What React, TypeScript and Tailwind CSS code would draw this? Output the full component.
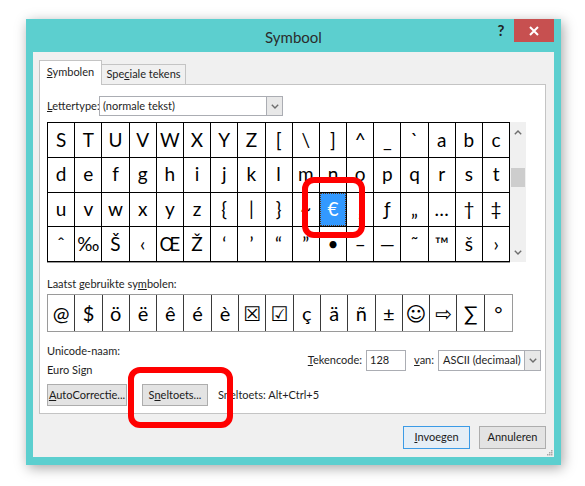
import React from "react";

const rows = [
  ["S", "T", "U", "V", "W", "X", "Y", "Z", "[", "\\", "]", "^", "_", "`", "a", "b", "c"],
  ["d", "e", "f", "g", "h", "i", "j", "k", "l", "m", "n", "o", "p", "q", "r", "s", "t"],
  ["u", "v", "w", "x", "y", "z", "{", "|", "}", "~", "€", "‚", "ƒ", "„", "…", "†", "‡"],
  ["ˆ", "‰", "Š", "‹", "Œ", "Ž", "‘", "’", "“", "”", "•", "–", "—", "˜", "™", "š", "›"],
];

const recent = ["@", "$", "ö", "ë", "ê", "é", "è", "☒", "☑", "ç", "ä", "ñ", "±", "☺", "⇨", "∑", "°"];

function Chevron({ up = false }: { up?: boolean }) {
  return (
    <svg width="8" height="5" viewBox="0 0 8 5" className={up ? "rotate-180" : ""}>
      <path d="M0.8 0.8 L4 4 L7.2 0.8" fill="none" stroke="#6d6d6d" strokeWidth="1.4" />
    </svg>
  );
}

function DropButton() {
  return (
    <div className="w-[16px] h-full flex items-center justify-center bg-[#e8e8e8] border-l border-[#abadb3]">
      <Chevron />
    </div>
  );
}

function Button({ children, w, primary = false }: { children: React.ReactNode; w: string; primary?: boolean }) {
  return (
    <div
      className={`${w} h-full flex items-center justify-center border ${
        primary ? "border-[#3c9be6] bg-[#e5eef6]" : "border-[#adadad] bg-[#e3e3e3]"
      } text-[#1a1a1a]`}
    >
      {children}
    </div>
  );
}

export default function App() {
  return (
    <div className="relative w-[585px] h-[486px] bg-white overflow-hidden whitespace-nowrap font-['Lato',sans-serif] text-[11px] text-[#1e1e1e]">
      <div className="ml-[26px] mt-[19px] w-[535px] h-[446px] bg-[#5ccfcf] px-[7px] pb-[8px] flex flex-col shadow-[2px_3px_12px_rgba(0,0,0,0.35)]">
        {/* title bar */}
        <div className="h-[33px] flex items-start shrink-0">
          <div className="w-[63px]" />
          <div className="flex-1 text-center pt-[9px] text-[15px] leading-[18px] text-[#2b2b2b]">Symbool</div>
          <div className="w-[20px] h-[23px] mr-[3px] flex items-center justify-center text-[15px] font-bold text-[#222]">?</div>
          <div className="w-[40px] h-[23px] bg-[#c75050] flex items-center justify-center">
            <svg width="10" height="10" viewBox="0 0 10 10">
              <path d="M1 1 L9 9 M9 1 L1 9" stroke="white" strokeWidth="2" />
            </svg>
          </div>
        </div>

        {/* dialog body */}
        <div className="relative flex-1 bg-[#f0f0f0] pl-[6px] pr-[8px] pt-[8px]">
          <div className="flex items-end h-[24px]">
            <div className="relative z-10 w-[63px] h-[25px] -mb-px bg-white border border-b-0 border-[#c4c4c4] flex items-center justify-center pb-[2px]">
              <span>
                <span className="underline">S</span>ymbolen
              </span>
            </div>
            <div className="w-[84px] h-[20px] bg-[#f0f0f0] border border-b-0 border-l-0 border-[#c4c4c4] flex items-center justify-center">
              <span>
                Spe<span className="underline">c</span>iale tekens
              </span>
            </div>
          </div>

          {/* tab page */}
          <div className="w-[507px] bg-white border border-[#c4c4c4] pl-[7px] pb-[7px]">
            <div className="mt-[11px] h-[20px] flex items-center">
              <div className="w-[52px]">
                <span className="underline">L</span>ettertype:
              </div>
              <div className="w-[184px] h-full border border-[#abadb3] bg-white flex">
                <div className="flex-1 pl-[3px] flex items-center">(normale tekst)</div>
                <DropButton />
              </div>
            </div>

            {/* character grid */}
            <div className="mt-[6px] flex h-[140px]">
              <div className="flex flex-col border-t border-l border-black shadow-[0_1px_0_#9a9a9a]">
                {rows.map((row, r) => (
                  <div key={r} className="flex">
                    {row.map((ch, c) => {
                      const sel = r === 2 && c === 10;
                      return (
                        <div
                          key={c}
                          className="w-[27.2px] h-[34.75px] border-r border-b border-black flex items-center justify-center text-[19px] text-black font-['Lato','DejaVu_Sans',sans-serif]"
                        >
                          {sel ? (
                            <div className="w-full h-full bg-[#3399ff] border border-dotted border-[#5b3310] flex items-center justify-center text-white">
                              {ch}
                            </div>
                          ) : (
                            ch
                          )}
                        </div>
                      );
                    })}
                  </div>
                ))}
              </div>
              <div className="w-[16px] h-full bg-[#f0f0f0] flex flex-col items-center">
                <div className="h-[20px] flex items-center">
                  <Chevron up />
                </div>
                <div className="mt-[26px] w-[14px] h-[19px] bg-[#cdcdcd]" />
                <div className="flex-1" />
                <div className="h-[20px] flex items-center">
                  <Chevron />
                </div>
              </div>
            </div>

            <div className="mt-[14px] h-[16px] leading-[16px]">
              Laatst gebruikte sy<span className="underline">m</span>bolen:
            </div>
            <div className="mt-[2px] w-fit h-[38px] flex border border-[#9a9a9a]">
              {recent.map((ch, i) => (
                <div
                  key={i}
                  className={`w-[27.3px] h-full flex items-center justify-center text-[20px] text-black font-['Lato','DejaVu_Sans',sans-serif] ${
                    i < recent.length - 1 ? "border-r border-[#3a3a3a]" : ""
                  }`}
                >
                  {ch}
                </div>
              ))}
            </div>

            {/* info */}
            <div className="mt-[11px] h-[35px] flex">
              <div className="flex flex-col gap-[3px] leading-[16px]">
                <div>Unicode-naam:</div>
                <div>Euro Sign</div>
              </div>
              <div className="flex-1" />
              <div className="mt-[7px] h-[21px] flex items-center pr-[4px]">
                <div className="mr-[4px]">
                  <span className="underline">T</span>ekencode:
                </div>
                <div className="w-[40px] h-full border border-[#abadb3] bg-white pl-[3px] flex items-center">128</div>
                <div className="ml-[8px] mr-[4px]">
                  <span className="underline">v</span>an:
                </div>
                <div className="w-[103px] h-full border border-[#abadb3] bg-white flex">
                  <div className="flex-1 pl-[4px] flex items-center">ASCII (decimaal)</div>
                  <DropButton />
                </div>
              </div>
            </div>

            {/* buttons */}
            <div className="mt-[6px] h-[22px] flex items-center">
              <Button w="w-[80px]">
                <span>
                  <span className="underline">A</span>utoCorrectie...
                </span>
              </Button>
              <div className="w-[15px]" />
              <Button w="w-[66px]">
                <span>
                  S<span className="underline">n</span>eltoets...
                </span>
              </Button>
              <div className="ml-[10px]">Sneltoets: Alt+Ctrl+5</div>
            </div>
          </div>

          <div className="mt-[12px] h-[23px] w-[507px] flex justify-end gap-[9px]">
            <Button w="w-[67px]" primary>
              <span>
                <span className="underline">I</span>nvoegen
              </span>
            </Button>
            <Button w="w-[67px]">Annuleren</Button>
          </div>

          <svg width="8" height="8" viewBox="0 0 8 8" className="absolute right-[1px] bottom-[1px]">
            <rect x="6" y="2" width="1.5" height="1.5" fill="#a8a8a8" />
            <rect x="4" y="4" width="1.5" height="1.5" fill="#a8a8a8" />
            <rect x="6" y="4" width="1.5" height="1.5" fill="#a8a8a8" />
            <rect x="2" y="6" width="1.5" height="1.5" fill="#a8a8a8" />
            <rect x="4" y="6" width="1.5" height="1.5" fill="#a8a8a8" />
            <rect x="6" y="6" width="1.5" height="1.5" fill="#a8a8a8" />
          </svg>
        </div>
      </div>

      {/* red highlight marks */}
      <div className="absolute left-[302px] top-[177px] w-[63px] h-[61px] border-[6px] border-[#ff0000] rounded-[12px]" />
      <div className="absolute left-[128px] top-[367px] w-[105px] h-[61px] border-[6px] border-[#ff0000] rounded-[12px]" />
    </div>
  );
}
